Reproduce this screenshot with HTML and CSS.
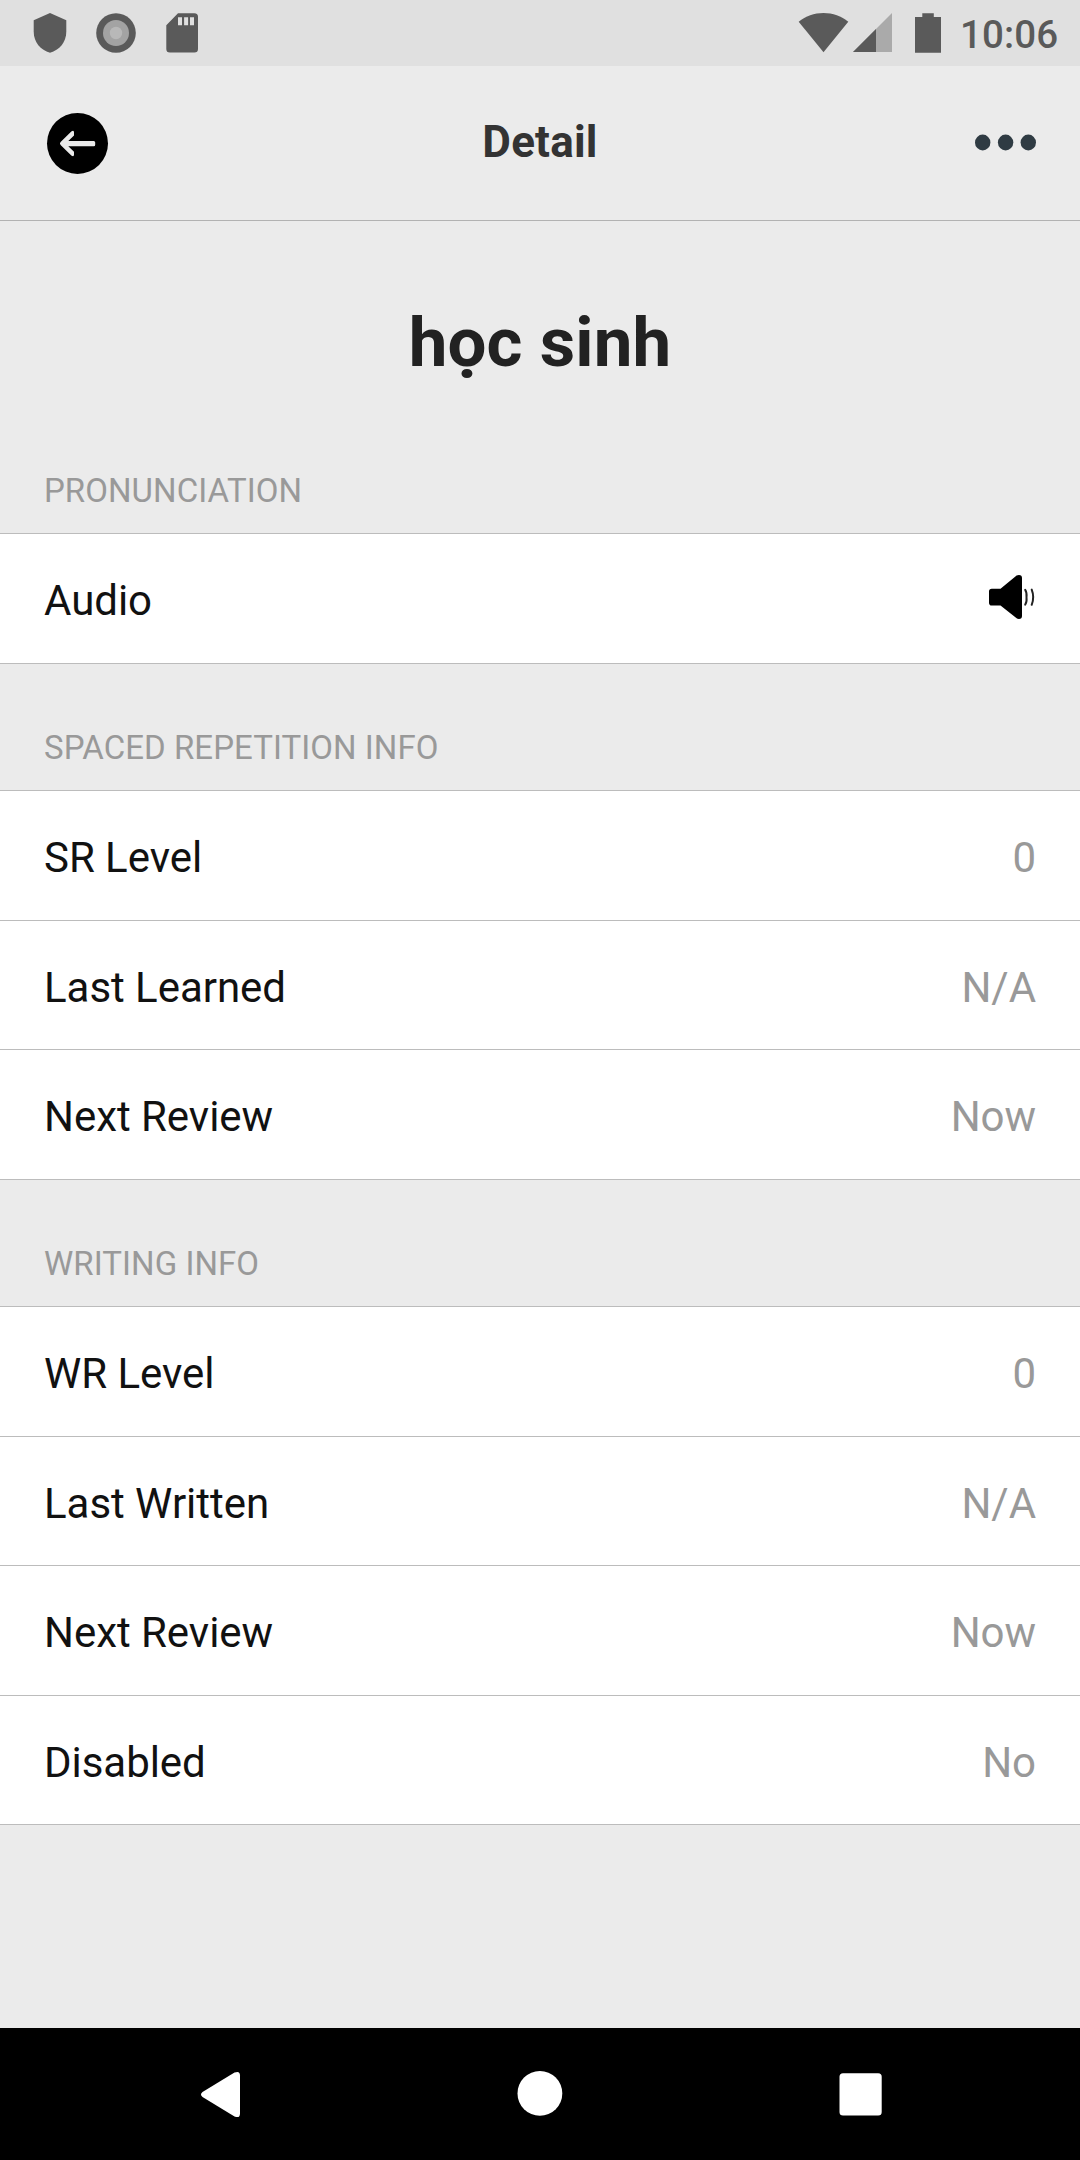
FILE: index.html
```html
<!DOCTYPE html>
<html lang="en">
<head>
<meta charset="utf-8">
<title>Detail</title>
<link rel="stylesheet" href="styles.css">
</head>
<body>
<div class="screen">
  <div class="status">
    <div class="status-left">
      <svg width="48" height="66" viewBox="26 0 48 66"><path fill="#5a5a5a" d="M50 13 33.7 20.3v11.5c0 10 6.9 18.7 16.3 20.9 9.4-2.2 16.3-10.9 16.3-20.9V20.3z"/></svg>
      <svg width="48" height="66" viewBox="92 0 48 66"><circle cx="116" cy="33" r="19.8" fill="#5a5a5a"/><circle cx="116" cy="33" r="13" fill="#a3a3a3"/><circle cx="116" cy="33" r="6.2" fill="#b8b8b8"/></svg>
      <svg width="48" height="66" viewBox="158 0 48 66"><path fill="#5a5a5a" d="M178 13.2h16.4a3.6 3.6 0 0 1 3.6 3.6v32.1a3.6 3.6 0 0 1-3.6 3.6h-24.5a3.6 3.6 0 0 1-3.6-3.6V25.2z"/><path fill="#e0e0e0" d="M178 17.2h4v8h-4zM184.1 17.2h4v8h-4zM190 17.2h4v8h-4z"/></svg>
    </div>
    <div class="status-right">
      <svg width="52" height="66" viewBox="797 0 52 66"><path fill="#5a5a5a" d="M823.5 52.2 848.3 21.7C841.4 16 832.8 13 823.5 13S805.6 16 798.7 21.7z"/></svg>
      <svg width="48" height="66" viewBox="849 0 48 66"><path fill="#aaa" d="M892 13v39h-39z"/><path fill="#5a5a5a" d="M876 29v23h-23z"/></svg>
      <svg width="62" height="66" viewBox="897 0 62 66"><path fill="#5a5a5a" d="M922.3 13.2h11.5v3.8h7.2v35.7h-26V17h7.3z"/></svg>
      <span class="clock">10:06</span>
    </div>
  </div>

  <header class="header">
    <svg class="back" width="62" height="62" viewBox="46 112 62 62"><circle cx="77.5" cy="143.4" r="30.5"/><path fill="#ebebeb" d="M60.600 142 71.300 131.600Q74 129.700 74 132.500V135.500L68.300 141H93.700a1.500 1.500 0 0 1 1.500 1.500v2.200a1.500 1.500 0 0 1-1.500 1.500H68.300L74 151.800V154.500Q74 157.300 71.300 155.400L60.600 145Q59.200 143.500 60.600 142z"/></svg>
    <h1 class="header-title">Detail</h1>
    <svg class="more" width="62" height="18" viewBox="974 134 62 18"><g fill="#2f3b43"><ellipse cx="982.7" cy="142.5" rx="7.7" ry="7.9"/><ellipse cx="1005.6" cy="142.5" rx="7.7" ry="7.9"/><ellipse cx="1028.3" cy="142.5" rx="7.7" ry="7.9"/></g></svg>
  </header>

  <main class="content">
    <h2 class="word">học sinh</h2>

    <h3 class="label">PRONUNCIATION</h3>
    <div class="list">
      <div class="row"><span>Audio</span>
        <svg class="speaker" width="47" height="46" viewBox="988 574 47 46"><path d="M989 591.500q0-2.800 2.800-2.800H1000.500L1016 576Q1017.500 575 1019 575q3 0 3 3v38q0 3-3 3-1.500 0-3-1.200L1000.500 605.500H991.800q-2.800 0-2.800-2.800z"/><path fill="none" stroke="#222" stroke-width="2" stroke-linecap="round" d="M1025.200 589.800q1.800 2.400 1.300 7.400.5 5-1.300 7.400M1031.700 589.600q3 7.600 0 15.200"/></svg>
      </div>
    </div>

    <h3 class="label">SPACED REPETITION INFO</h3>
    <div class="list">
      <div class="row"><span>SR Level</span><span class="value">0</span></div>
      <div class="row"><span>Last Learned</span><span class="value">N/A</span></div>
      <div class="row"><span>Next Review</span><span class="value">Now</span></div>
    </div>

    <h3 class="label">WRITING INFO</h3>
    <div class="list">
      <div class="row"><span>WR Level</span><span class="value">0</span></div>
      <div class="row"><span>Last Written</span><span class="value">N/A</span></div>
      <div class="row"><span>Next Review</span><span class="value">Now</span></div>
      <div class="row"><span>Disabled</span><span class="value">No</span></div>
    </div>
  </main>

  <nav class="nav">
    <svg width="48" height="48" viewBox="197 2070 48 48"><path fill="#fff" d="M202.5 2092 234.5 2072.6Q240 2070.3 240 2075.5V2113.500Q240 2118.700 234.500 2116.400L202.500 2097Q199.500 2094.500 202.500 2092z"/></svg>
    <svg width="48" height="48" viewBox="516.500 2070 48 48"><circle cx="539.400" cy="2093.400" r="22.400" fill="#fff"/></svg>
    <svg width="48" height="48" viewBox="836 2070 48 48"><rect x="839.500" y="2073.300" width="42.200" height="42.300" rx="3.500" fill="#fff"/></svg>
  </nav>
</div>
</body>
</html>
```
FILE: styles.css
```css
* { box-sizing: border-box; }

body {
  margin: 0;
  font-family: Roboto, "Liberation Sans", sans-serif;
  background: #ebebeb;
}

svg { display: block; flex: none; overflow: visible; }
h1, h2, h3 { margin: 0; }

.screen {
  display: flex;
  flex-direction: column;
  width: 1080px;
  height: 2160px;
  overflow: hidden;
}

.status {
  display: flex;
  justify-content: space-between;
  height: 66px;
  flex: none;
  padding: 0 22px 0 26px;
  background: #e0e0e0;
}

.status-left { display: flex; gap: 18px; }
.status-right { display: flex; }

.clock {
  width: 99px;
  padding-left: 1px;
  font-size: 38.5px;
  font-weight: 500;
  line-height: 69px;
  letter-spacing: 0.1px;
  color: #5a5a5a;
  white-space: nowrap;
}

.header {
  display: grid;
  grid-template-columns: 1fr auto 1fr;
  align-items: center;
  height: 155px;
  flex: none;
  padding: 0 44px;
  border-bottom: 1px solid #b2b2b2;
}

.back { margin-left: 2px; }

.header-title {
  padding-bottom: 2px;
  font-size: 44px;
  font-weight: 700;
  line-height: 52px;
  letter-spacing: 0.2px;
  color: #333;
}

.more { justify-self: end; }

.content { flex: 1; }

.word {
  height: 185.5px;
  padding-top: 81px;
  font-size: 69px;
  font-weight: 700;
  line-height: 81px;
  letter-spacing: 0.1px;
  text-align: center;
  color: #222;
}

.label {
  display: flex;
  align-items: flex-end;
  height: 126.5px;
  padding: 0 44px 23px;
  font-size: 33px;
  font-weight: 400;
  line-height: 39px;
  letter-spacing: 0.05px;
  color: #999;
}

.list {
  background: #fff;
  border-bottom: 1px solid #bcbcbc;
}

.row {
  display: flex;
  align-items: center;
  justify-content: space-between;
  height: 129.5px;
  padding: 6px 44px 0;
  border-top: 1px solid #bcbcbc;
  font-size: 42px;
  line-height: 50px;
  letter-spacing: -0.04px;
  color: #111;
}

.value { color: #999; }

.speaker { margin: -8px 1px 0 0; }

.nav {
  display: flex;
  justify-content: space-between;
  height: 132px;
  flex: none;
  padding: 42px 196px 0 197px;
  background: #000;
}
```
